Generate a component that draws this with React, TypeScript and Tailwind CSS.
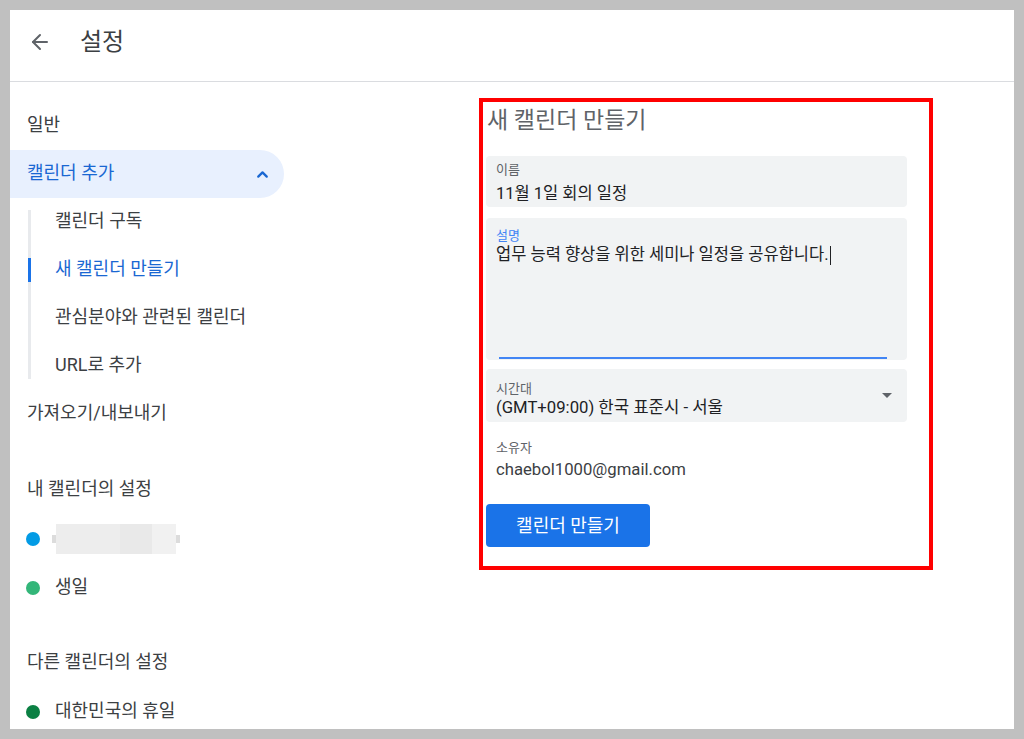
import React from "react";
import { ArrowLeft, ChevronUp } from "lucide-react";

const F = "font-['Roboto','Noto_Sans_CJK_KR',sans-serif]";

function NavItem({ children, sub, active }: { children: React.ReactNode; sub?: boolean; active?: boolean }) {
  return (
    <div className={`h-[48px] flex items-center pb-[3px] ${sub ? "pl-[45px]" : "pl-[17px]"} text-[18px] ${active ? "text-[#1967d2]" : "text-[#3c4043]"}`}>
      {children}
    </div>
  );
}

function DotItem({ color, children, tight }: { color: string; children: React.ReactNode; tight?: boolean }) {
  return (
    <div className="h-[49px] flex items-center pl-[16px] text-[18px] text-[#3c4043]">
      <span className={`w-[14px] h-[14px] rounded-full ${color}`} />
      <span className={`${tight ? "ml-[12px]" : "ml-[15px] pb-[3px]"} flex items-center`}>{children}</span>
    </div>
  );
}

export default function App() {
  return (
    <div className={`w-[1024px] h-[739px] bg-[#c0c0c0] p-[10px] ${F}`}>
      <div className="w-full h-full bg-white flex flex-col overflow-hidden">
        <div className="h-[72px] shrink-0 border-b border-[#dadce0] flex items-center pl-[18px] pb-[7px]">
          <ArrowLeft size={24} color="#5f6368" strokeWidth={2} />
          <span className="ml-[28px] text-[24px] text-[#3c4043]">설정</span>
        </div>
        <div className="flex flex-1 min-h-0">
          <div className="w-[274px] shrink-0 pt-[20px]">
            <NavItem>일반</NavItem>
            <div className="h-[48px] flex items-center justify-between pl-[17px] pr-[13px] bg-[#e8f0fe] rounded-r-full text-[18px] text-[#1967d2]">
              <span className="pb-[3px]">캘린더 추가</span>
              <ChevronUp size={17} strokeWidth={3.2} color="#1967d2" />
            </div>
            <div className="relative">
              <div className="absolute left-[18px] top-[12px] bottom-[11px] w-[3px] bg-[#e8eaed]" />
              <div className="absolute left-[18px] top-[60px] h-[24px] w-[3px] bg-[#1a73e8]" />
              <NavItem sub>캘린더 구독</NavItem>
              <NavItem sub active>새 캘린더 만들기</NavItem>
              <NavItem sub>관심분야와 관련된 캘린더</NavItem>
              <NavItem sub>URL로 추가</NavItem>
            </div>
            <NavItem>가져오기/내보내기</NavItem>
            <div className="mt-[28px]">
              <NavItem>내 캘린더의 설정</NavItem>
              <DotItem color="bg-[#039be5]" tight>
                <span className="w-[4px] h-[8px] bg-[#dcdcdc]" />
                <span className="flex h-[30px]">
                  <span className="w-[64px] bg-[#ededed]" />
                  <span className="w-[32px] bg-[#e9e9e9]" />
                  <span className="w-[24px] bg-[#f1f1f1]" />
                </span>
                <span className="w-[4px] h-[8px] bg-[#dcdcdc]" />
              </DotItem>
              <DotItem color="bg-[#33b679]">생일</DotItem>
            </div>
            <div className="mt-[27px]">
              <NavItem>다른 캘린더의 설정</NavItem>
              <DotItem color="bg-[#0b8043]">대한민국의 휴일</DotItem>
            </div>
          </div>
          <div className="pl-[195px] pt-[16px]">
            <div className="w-[454px] h-[472px] border-[4px] border-[#ff0000] pl-[3px] pt-[4px]">
              <div className="pl-[1px] text-[23px] leading-[30px] text-[#5f6368]">새 캘린더 만들기</div>
              <div className="mt-[20px] w-[421px] h-[51px] bg-[#f1f3f4] rounded-[4px] pl-[10px] pt-[6px] flex flex-col">
                <span className="text-[13px] leading-[16px] text-[#5f6368]">이름</span>
                <span className="mt-[5px] text-[16.5px] leading-[22px] text-[#202124]">11월 1일 회의 일정</span>
              </div>
              <div className="mt-[11px] w-[421px] h-[142px] bg-[#f1f3f4] rounded-[4px] pl-[10px] pt-[10px] flex flex-col">
                <span className="text-[13px] leading-[16px] text-[#4285f4]">설명</span>
                <span className="text-[16.5px] leading-[22px] text-[#202124] flex items-center">
                  업무 능력 향상을 위한 세미나 일정을 공유합니다.
                  <span className="w-[1px] h-[19px] bg-[#202124] ml-[1px]" />
                </span>
                <div className="flex-1" />
                <div className="ml-[3px] mb-[1px] w-[388px] h-[2px] bg-[#4285f4]" />
              </div>
              <div className="mt-[9px] w-[421px] h-[53px] bg-[#f1f3f4] rounded-[4px] pl-[10px] pr-[15px] pt-[12px] flex items-start justify-between">
                <div className="flex flex-col">
                  <span className="text-[13px] leading-[16px] text-[#5f6368]">시간대</span>
                  <span className="text-[16.7px] leading-[22px] text-[#202124]">(GMT+09:00) 한국 표준시 - 서울</span>
                </div>
                <svg width="10" height="5" viewBox="0 0 10 5" className="mt-[12px]">
                  <path d="M0 0 L10 0 L5 5 Z" fill="#5f6368" />
                </svg>
              </div>
              <div className="mt-[18px] pl-[10px] flex flex-col">
                <span className="text-[13px] leading-[16px] text-[#5f6368]">소유자</span>
                <span className="mt-[3px] text-[16.7px] leading-[22px] text-[#3c4043]">chaebol1000@gmail.com</span>
              </div>
              <div className="mt-[23px] w-[164px] h-[43px] bg-[#1a73e8] rounded-[4px] flex items-center justify-center text-white text-[18px]">
                캘린더 만들기
              </div>
            </div>
          </div>
        </div>
      </div>
    </div>
  );
}
